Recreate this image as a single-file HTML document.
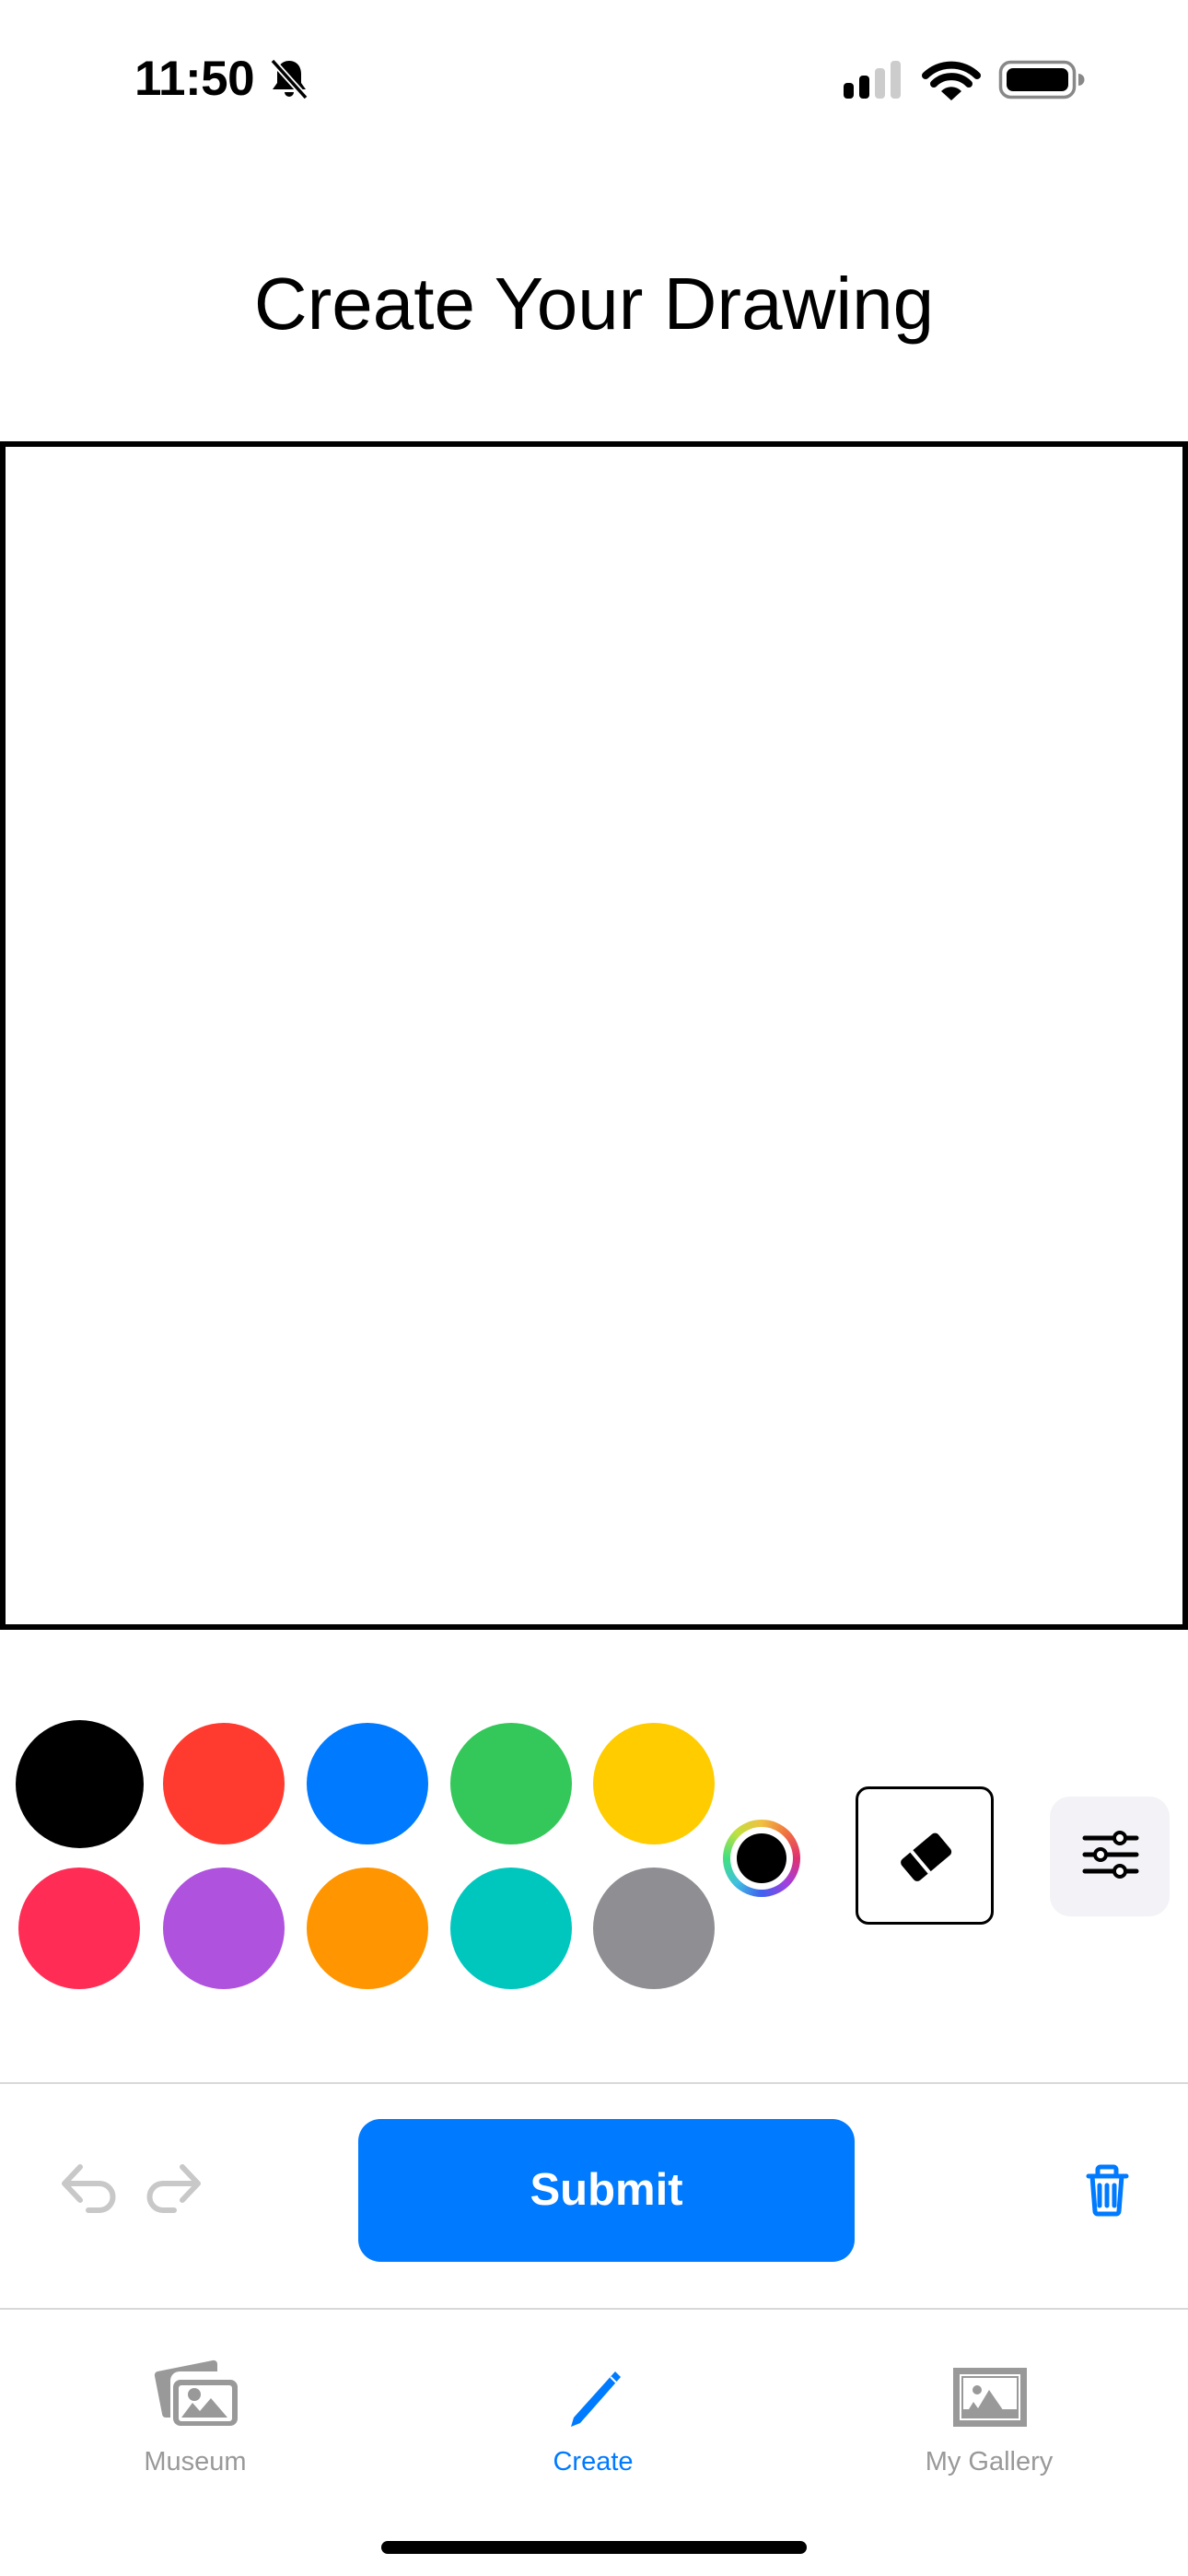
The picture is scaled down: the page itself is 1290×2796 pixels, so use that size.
<!DOCTYPE html>
<html><head><meta charset="utf-8"><style>
html,body{margin:0;padding:0;background:#fff;}
body{width:1290px;height:2796px;position:relative;overflow:hidden;font-family:"Liberation Sans",sans-serif;}
.a{position:absolute;}
.c{position:absolute;border-radius:50%;}
</style></head><body>
<div class="a" style="left:146px;top:56px;font-size:53px;font-weight:bold;letter-spacing:-0.5px;line-height:60px;">11:50</div>
<svg class="a" style="left:290px;top:62px" width="48" height="48" viewBox="0 0 48 48">
<path d="M24 4c-8 0-13 6-13 14v10l-5 7h36l-5-7V18c0-8-5-14-13-14z" fill="#000"/>
<path d="M19 38a5 5 0 0 0 10 0z" fill="#000"/>
<line x1="6" y1="4" x2="42" y2="44" stroke="#fff" stroke-width="7"/>
<line x1="6" y1="4" x2="42" y2="44" stroke="#000" stroke-width="3.5"/>
</svg>
<svg class="a" style="left:912px;top:62px" width="270" height="50">
<rect x="4" y="28" width="11" height="17" rx="4" fill="#000"/>
<rect x="21" y="20" width="11" height="25" rx="4" fill="#000"/>
<rect x="38" y="12" width="11" height="33" rx="4" fill="#ccc"/>
<rect x="55" y="4" width="11" height="41" rx="4" fill="#ccc"/>
<path d="M93 20a40 40 0 0 1 56 0" stroke="#000" stroke-width="8" fill="none" stroke-linecap="round"/>
<path d="M102 29a27 27 0 0 1 38 0" stroke="#000" stroke-width="8" fill="none" stroke-linecap="round"/>
<path d="M110 37l11 10 11-10a15 15 0 0 0-22 0z" fill="#000"/>
<rect x="174.5" y="5.5" width="80" height="38" rx="11" fill="none" stroke="#888" stroke-width="3.5"/>
<rect x="181" y="12" width="67" height="25" rx="7" fill="#000"/>
<path d="M259 18a6 6 0 0 1 0 13z" fill="#888"/>
</svg>
<div class="a" style="left:0;width:1290px;top:283px;text-align:center;font-size:80px;line-height:94px;color:#000;">Create Your Drawing</div>
<div class="a" style="left:0;top:479px;width:1290px;height:1290px;box-sizing:border-box;border:6px solid #000;"></div>

<div class="c" style="left:17px;top:1867px;width:139px;height:139px;background:#000"></div>
<div class="c" style="left:177px;top:1870px;width:132px;height:132px;background:#ff3b30"></div>
<div class="c" style="left:333px;top:1870px;width:132px;height:132px;background:#007aff"></div>
<div class="c" style="left:489px;top:1870px;width:132px;height:132px;background:#34c759"></div>
<div class="c" style="left:644px;top:1870px;width:132px;height:132px;background:#ffcc00"></div>
<div class="c" style="left:20px;top:2027px;width:132px;height:132px;background:#ff2d55"></div>
<div class="c" style="left:177px;top:2027px;width:132px;height:132px;background:#af52de"></div>
<div class="c" style="left:333px;top:2027px;width:132px;height:132px;background:#ff9500"></div>
<div class="c" style="left:489px;top:2027px;width:132px;height:132px;background:#00c7be"></div>
<div class="c" style="left:644px;top:2027px;width:132px;height:132px;background:#8e8e93"></div>
<div class="c" style="left:785px;top:1975px;width:84px;height:84px;background:conic-gradient(#f0c040,#f07040,#e03070,#a040e0,#4060f0,#40c0e0,#40e080,#c0e040,#f0c040);"></div>
<div class="c" style="left:793px;top:1983px;width:68px;height:68px;background:#fff"></div>
<div class="c" style="left:800px;top:1990px;width:54px;height:54px;background:#000"></div>

<div class="a" style="left:929px;top:1939px;width:150px;height:150px;box-sizing:border-box;border:3.5px solid #000;border-radius:14px;"></div>
<svg class="a" style="left:969px;top:1979px" width="72" height="72" viewBox="0 0 72 72">
<g transform="rotate(-40 36 36)">
<rect x="10" y="22" width="52" height="30" rx="5" fill="#000"/>
<line x1="28" y1="18" x2="28" y2="56" stroke="#fff" stroke-width="4"/>
</g>
</svg>
<div class="a" style="left:1140px;top:1950px;width:130px;height:130px;background:#f2f2f7;border-radius:22px;"></div>
<svg class="a" style="left:1170px;top:1980px" width="72" height="72">
<g stroke="#000" stroke-width="5" stroke-linecap="round"><line x1="8" y1="15" x2="64" y2="15"/><line x1="8" y1="33" x2="64" y2="33"/><line x1="8" y1="51" x2="64" y2="51"/></g>
<g fill="#fff" stroke="#000" stroke-width="4"><circle cx="46" cy="15" r="6"/><circle cx="25" cy="33" r="6"/><circle cx="46" cy="51" r="6"/></g>
</svg>

<div class="a" style="left:0;top:2260px;width:1290px;height:2px;background:#d8d8d8"></div>
<svg class="a" style="left:60px;top:2345px" width="170" height="65">
<g stroke="#c8c8c8" stroke-width="6" fill="none" stroke-linecap="round" stroke-linejoin="round">
<path d="M27 7L10 25l17 18M10 25h38a14 14 0 0 1 0 29H36"/>
<path d="M138 7l17 18-17 18M155 25h-38a14 14 0 0 0 0 29h12"/>
</g></svg>
<div class="a" style="left:389px;top:2300px;width:539px;height:155px;background:#007aff;border-radius:24px;color:#fff;font-size:49px;font-weight:bold;text-align:center;line-height:155px;">Submit</div>
<svg class="a" style="left:1170px;top:2345px" width="64" height="66">
<g stroke="#007aff" stroke-width="5" fill="none" stroke-linecap="round" stroke-linejoin="round">
<path d="M12 17h41M22 17V10a3 3 0 0 1 3-3h14a3 3 0 0 1 3 3v7"/>
<path d="M16 17l3 38a3 3 0 0 0 3 3h20a3 3 0 0 0 3-3l3-38"/>
<path d="M24 27v22M32 27v22M40 27v22"/>
</g></svg>
<div class="a" style="left:0;top:2505px;width:1290px;height:2px;background:#d8d8d8"></div>

<svg class="a" style="left:165px;top:2560px" width="100" height="80">
<path d="M6 14l60-12a4 4 0 0 1 5 4v8H30a10 10 0 0 0-10 10v40h-5a4 4 0 0 1-4-4L3 19a4 4 0 0 1 3-5z" fill="#999"/>
<rect x="23" y="23" width="70" height="50" rx="8" fill="#999"/>
<rect x="29" y="29" width="58" height="39" rx="3" fill="#fff"/>
<circle cx="46" cy="39" r="7" fill="#999"/>
<path d="M32 64l12-16 8 9 12-14 18 21z" fill="#999"/>
</svg>
<svg class="a" style="left:610px;top:2570px" width="70" height="70">
<path d="M58 4l6 6-44 50-10 4 3-10z" fill="#007aff"/>
<line x1="53" y1="10" x2="59" y2="16" stroke="#fff" stroke-width="2"/>
</svg>
<svg class="a" style="left:1033px;top:2568px" width="84" height="68">
<rect x="2" y="2" width="80" height="64" fill="#999"/>
<rect x="9" y="9" width="66" height="50" fill="#fff"/>
<rect x="12" y="12" width="60" height="44" fill="#fff" stroke="#999" stroke-width="2"/>
<circle cx="28" cy="26" r="5" fill="#999"/>
<path d="M14 55l10-16 5 7 12-20 20 29z" fill="#999"/>
<rect x="12" y="47" width="60" height="9" fill="#999"/>
</svg>
<div class="a" style="left:112px;top:2654px;width:200px;text-align:center;font-size:29px;color:#999;line-height:36px;">Museum</div>
<div class="a" style="left:544px;top:2654px;width:200px;text-align:center;font-size:29px;color:#007aff;line-height:36px;">Create</div>
<div class="a" style="left:954px;top:2654px;width:240px;text-align:center;font-size:29px;color:#999;line-height:36px;">My Gallery</div>
<div class="a" style="left:414px;top:2758px;width:462px;height:14px;border-radius:7px;background:#000"></div>
</body></html>
